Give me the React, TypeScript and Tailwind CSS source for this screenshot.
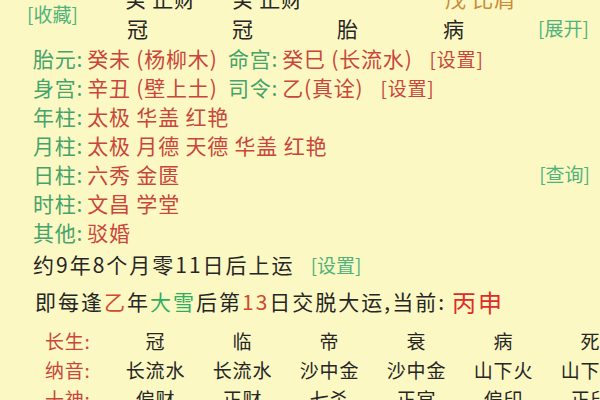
import React from "react";

const G = "text-[#45a36b]";
const R = "text-[#c9463b]";
const LG = "text-[#4fb37c]";

function InfoRow({ label, children }: { label: string; children: React.ReactNode }) {
  return (
    <div className="flex h-[29px] items-center pl-[33px] text-[21px] leading-[29px] tracking-[0.8px]">
      <span className={G}>{label}:</span>
      <span className={`${R} ml-[4px]`}>{children}</span>
    </div>
  );
}

export default function App() {
  const cols1 = ["冠", "临", "帝", "衰", "病", "死"];
  const cols2 = ["长流水", "长流水", "沙中金", "沙中金", "山下火", "山下火"];
  const cols3 = ["偏财", "正财", "七杀", "正官", "偏印", "正印"];
  return (
    <div className="w-[600px] h-[400px] overflow-hidden bg-[#fcf8c3] font-['Noto_Sans_CJK_SC',sans-serif] text-[#262626]">
      {/* top area */}
      <div className="flex -mt-[17px] h-[61px]">
        <div className={`w-[127px] pl-[27px] pt-[21px] text-[19px] leading-[20px] ${LG}`}>[收藏]</div>
        <div className="grid grid-cols-[105px_105px_106px_95px] grid-rows-[30px_30px] text-[21px] leading-[30px]">
          <div className="-ml-[2px] tracking-[0.8px]">癸 正财</div>
          <div className="tracking-[0.8px]">癸 正财</div>
          <div></div>
          <div className="ml-[2px] text-[#c98b3c] tracking-[0.8px]">戊 比肩</div>
          <div>冠</div>
          <div>冠</div>
          <div>胎</div>
          <div>病</div>
        </div>
        <div className={`pt-[35px] text-[19px] leading-[20px] ${LG}`}>[展开]</div>
      </div>

      {/* info rows */}
      <div className="flex h-[29px] items-center pl-[33px] text-[21px] leading-[29px] tracking-[0.8px]">
        <div className="w-[195px] shrink-0">
          <span className={G}>胎元:</span>
          <span className={`${R} ml-[4px]`}>癸未 (杨柳木)</span>
        </div>
        <span className={G}>命宫:</span>
        <span className={`${R} ml-[4px]`}>癸巳 (长流水)</span>
        <span className={`${R} ml-[17px] text-[19px]`}>[设置]</span>
      </div>
      <div className="flex h-[29px] items-center pl-[33px] text-[21px] leading-[29px] tracking-[0.8px]">
        <div className="w-[195px] shrink-0">
          <span className={G}>身宫:</span>
          <span className={`${R} ml-[4px]`}>辛丑 (壁上土)</span>
        </div>
        <span className={G}>司令:</span>
        <span className={`${R} ml-[4px]`}>乙(真诠)</span>
        <span className={`${R} ml-[17px] text-[19px]`}>[设置]</span>
      </div>
      <InfoRow label="年柱">太极 华盖 红艳</InfoRow>
      <InfoRow label="月柱">太极 月德 天德 华盖 红艳</InfoRow>
      <div className="flex h-[29px] items-center pr-[10px]">
        <InfoRow label="日柱">六秀 金匮</InfoRow>
        <span className={`ml-auto text-[19px] ${LG}`}>[查询]</span>
      </div>
      <InfoRow label="时柱">文昌 学堂</InfoRow>
      <InfoRow label="其他">驳婚</InfoRow>

      {/* luck */}
      <div className="flex h-[36px] items-center pl-[33px] text-[21px] tracking-[2px]">
        <span>约9年8个月零11日后上运</span>
        <span className={`ml-[16px] text-[19px] tracking-normal ${LG}`}>[设置]</span>
      </div>
      <div className="flex h-[38px] items-center pl-[35px] text-[21px] tracking-[2px]">
        <span>即每逢</span>
        <span className="text-[#cf4a2f]">乙</span>
        <span>年</span>
        <span className="text-[#2fae5f]">大雪</span>
        <span>后第</span>
        <span className="text-[#cf4a2f]">13</span>
        <span>日交脱大运,当前:</span>
        <span className="ml-[6px] text-[24px] text-[#e02a2a]">丙申</span>
      </div>

      {/* bottom table */}
      <div className="mt-[5px] grid grid-cols-[67px_repeat(6,87px)] auto-rows-[29px] pl-[45px] text-[19px] leading-[29px] tracking-[0.8px]">
        <div className={R}>长生:</div>
        {cols1.map((c, i) => (
          <div key={"a" + i} className="text-center">{c}</div>
        ))}
        <div className={R}>纳音:</div>
        {cols2.map((c, i) => (
          <div key={"b" + i} className="text-center">{c}</div>
        ))}
        <div className={R}>十神:</div>
        {cols3.map((c, i) => (
          <div key={"c" + i} className="text-center">{c}</div>
        ))}
      </div>
    </div>
  );
}
